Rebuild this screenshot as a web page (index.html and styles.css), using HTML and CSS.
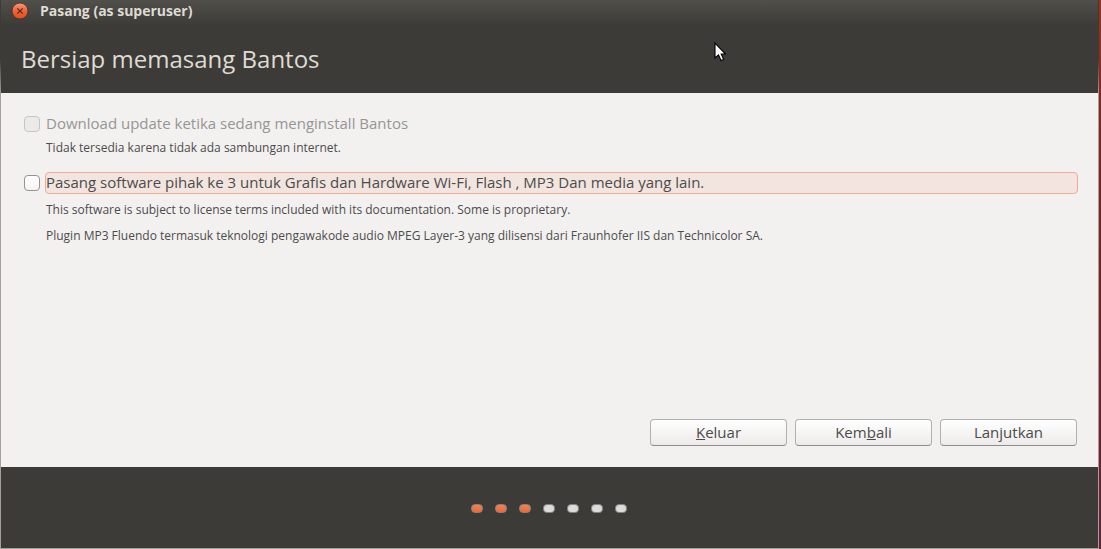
FILE: index.html
```html
<!DOCTYPE html>
<html lang="id">
<head>
<meta charset="utf-8">
<title>Pasang (as superuser)</title>
<link rel="stylesheet" href="styles.css">
</head>
<body class="desktop">
<div class="window">
  <header class="top">
    <div class="titlebar">
      <button class="close" type="button" aria-label="Tutup">
        <svg viewBox="0 0 18 18" width="18" height="18" aria-hidden="true">
          <defs><linearGradient id="orb" x1="0" y1="0" x2="0" y2="1"><stop offset="0" stop-color="#f79a78"/><stop offset=".5" stop-color="#ee6238"/><stop offset="1" stop-color="#e44d1c"/></linearGradient></defs>
          <circle cx="9" cy="9" r="8" fill="url(#orb)" stroke="#37342f" stroke-width=".8"/>
          <path d="M6.300 6.300l5.400 5.400M11.700 6.300l-5.400 5.400" stroke="#4a2a1d" stroke-width="1.2"/>
        </svg>
      </button>
      <span class="caption">Pasang (as superuser)</span>
    </div>
    <h1 class="heading">Bersiap memasang Bantos</h1>
  </header>
  <main class="content">
    <div class="option">
      <input class="box" type="checkbox" id="updates" disabled>
      <label class="label label-off" for="updates">Download update ketika sedang menginstall Bantos</label>
    </div>
    <p class="note note-first">Tidak tersedia karena tidak ada sambungan internet.</p>
    <div class="option">
      <input class="box" type="checkbox" id="thirdparty">
      <label class="label label-focus" for="thirdparty">Pasang software pihak ke 3 untuk Grafis dan Hardware Wi-Fi, Flash , MP3 Dan media yang lain.</label>
    </div>
    <p class="note note-license">This software is subject to license terms included with its documentation. Some is proprietary.</p>
    <p class="note">Plugin MP3 Fluendo termasuk teknologi pengawakode audio MPEG Layer-3 yang dilisensi dari Fraunhofer IIS dan Technicolor SA.</p>
    <div class="actions">
      <button class="action" type="button"><u>K</u>eluar</button>
      <button class="action" type="button">Kem<u>b</u>ali</button>
      <button class="action" type="button">Lanjutkan</button>
    </div>
  </main>
  <footer class="steps">
    <span class="dot dot-done"></span><span class="dot dot-done"></span><span class="dot dot-done"></span><span class="dot"></span><span class="dot"></span><span class="dot"></span><span class="dot"></span>
  </footer>
</div>
<svg class="pointer" viewBox="0 0 12 20" width="12" height="20" aria-hidden="true">
  <path d="M1 1v15l3.500-3.200L7 18.500l2.600-1.100L7.200 12H11.500z" fill="#fff" stroke="#000" stroke-width="1.100"/>
</svg>
</body>
</html>
```

FILE: styles.css
```css
* {
  box-sizing: border-box;
}

.desktop {
  margin: 0;
  padding-right: 2px;
  min-height: 100vh;
  display: flex;
  background: linear-gradient(#9c3121, #7b2b20 20%, #6f2424 60%, #68213a);
  font-family: "Open Sans", "Noto Sans", sans-serif;
  color: #4c4c4c;
}

.window {
  flex: 1;
  display: flex;
  flex-direction: column;
  border: 1px solid #a5a09b;
  border-top: 0;
  border-image: linear-gradient(#3c3b37 60px, #a5a09b 95px) 1;
  background: #f2f1f0;
}

.top {
  height: 93px;
  background: linear-gradient(#504f4a, #3c3b37 26px);
  color: #dfdbd2;
}

.titlebar {
  height: 22px;
  padding-left: 10px;
  display: flex;
  align-items: center;
  gap: 11px;
}

.close {
  width: 18px;
  height: 18px;
  padding: 0;
  border: 0;
  background: none;
}

.close svg {
  display: block;
}

.caption {
  font-size: 14px;
  font-weight: 700;
  line-height: 22px;
}

.heading {
  margin: 0;
  padding: 20px 20px 0;
  font-size: 24px;
  font-weight: 400;
  line-height: 34px;
}

.content {
  flex: 1;
  display: flex;
  flex-direction: column;
  padding: 20px 20px 21px 23px;
}

.option {
  display: flex;
  align-items: center;
  gap: 5px;
}

.box {
  appearance: none;
  flex: none;
  width: 16px;
  height: 16px;
  margin: 0;
  border: 1px solid #969492;
  border-radius: 4px;
  background: linear-gradient(#fff, #f5f4f3);
}

.box:disabled {
  border-color: #c8c6c4;
  background: #ebeae9;
}

.label {
  flex: 1;
  padding-bottom: 2px;
  border: 1px solid transparent;
  border-radius: 4px;
  font-size: 15px;
  line-height: 18px;
}

.label-off {
  color: #979594;
}

.label-focus {
  border-color: #f3ab92;
  background: #f2e4df;
}

.note {
  margin: 0;
  padding-left: 22px;
  font-size: 12px;
  line-height: 18px;
}

.note-first {
  margin: 4px 0 15px;
}

.note-license {
  margin: 7px 0 8px;
}

.actions {
  margin-top: auto;
  padding-right: 1px;
  display: flex;
  justify-content: flex-end;
  gap: 8px;
}

.action {
  width: 137px;
  height: 27px;
  padding: 0 0 2px;
  border: 1px solid #b2b0ae;
  border-bottom-color: #8f8d8b;
  border-radius: 4px;
  background: linear-gradient(#fff, #edebea);
  color: #4c4c4c;
  font: 15px/20px "Open Sans", "Noto Sans", sans-serif;
}

.steps {
  height: 81px;
  padding: 2px 2px 0 0;
  display: flex;
  align-items: center;
  justify-content: center;
  gap: 12px;
  background: #3c3b37;
}

.dot {
  width: 12px;
  height: 9px;
  border: 1px solid #85827d;
  border-radius: 4px;
  background: #dcdcdc;
}

.dot-done {
  background: linear-gradient(#f58052, #e96a3c);
}

.pointer {
  position: absolute;
  left: 714px;
  top: 42px;
}
```
